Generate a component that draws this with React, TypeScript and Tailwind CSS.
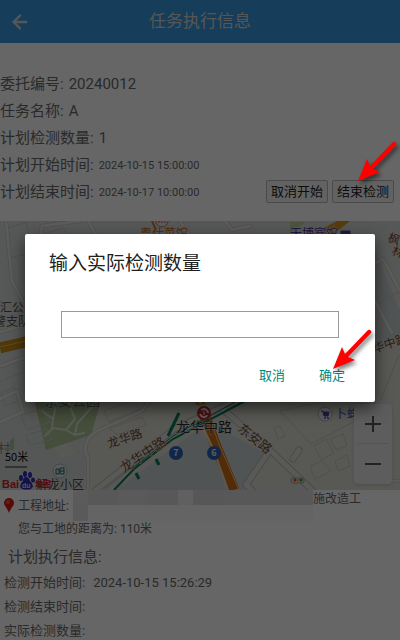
import { useState } from "react";
import type { ReactNode } from "react";
import { ArrowLeft } from "lucide-react";

const summary = [
  { label: "委托编号", value: "20240012" },
  { label: "任务名称", value: "A" },
  { label: "计划检测数量", value: "1" },
  { label: "计划开始时间", value: "2024-10-15 15:00:00", small: true },
  { label: "计划结束时间", value: "2024-10-17 10:00:00", small: true },
];

const execution = [
  { label: "检测开始时间", value: "2024-10-15 15:26:29" },
  { label: "检测结束时间", value: "" },
  { label: "实际检测数量", value: "" },
];

const cjk = "'Noto Sans CJK SC', sans-serif";

function PointerArrow({ className }: { className: string }) {
  return (
    <svg className={className} width="44" height="46" viewBox="0 0 44 46" aria-hidden="true">
      <g fill="#f00" style={{ filter: "drop-shadow(2px 3px 2px rgba(0,0,0,.5))" }}>
        <path d="M2 41 11 19 14 26 37 2Q39 1 40 3 41 4 40 5L17 29 24 32Z" />
      </g>
    </svg>
  );
}

function RoadName({ x, y, angle, size = 12, children }: { x: number; y: number; angle: number; size?: number; children: ReactNode }) {
  return (
    <text
      transform={`translate(${x} ${y}) rotate(${angle})`}
      fontSize={size}
      fill="#6d4a34"
      stroke="#e0ded8"
      strokeWidth="1"
      paintOrder="stroke"
    >
      {children}
    </text>
  );
}

function CityMap() {
  return (
    <svg className="block h-[269px] w-full" viewBox="0 0 400 269" preserveAspectRatio="xMidYMid slice" fontFamily={cjk} role="img" aria-label="地图">
      <rect width="400" height="269" fill="#dddbd3" />
      {/* districts */}
      <path d="M0 0H400V60L350 80 0 190Z" fill="#d6dbd9" />
      <path d="M375 30 400 90V120L375 130Z" fill="#cbd3d2" />
      <path d="M0 145 30 140V190L82 269H0Z" fill="#d3d9d7" />
      <path d="M40 190 76 232 46 245 70 269H85V225L95 200 70 182Z" fill="#d4dad8" />
      <path d="M115 269 200 207 234 269Z" fill="#cad3d2" />
      <path d="M217 206 268 233 247 269H232Z" fill="#cad3d2" />
      <path d="M34 179H101L91 214 46 229Z" fill="#adc193" />
      <path d="M10 220 14 216V229H9Z" fill="#adc193" />
      <path d="M290 1H305L290 13Z" fill="#bdd198" />

      {/* blocks */}
      <g fill="none" stroke="#c4c7c4" strokeWidth="1">
        <path d="M6 8 26 1 33 31 10 37ZM43 13 64 7 74 27 52 32ZM0 130 24 125M0 160 24 151M1 172 14 166 18 180 5 185ZM21 194 43 188 50 201 27 209ZM26 214 47 208 51 219 30 224Z" />
        <path d="M104 190 133 179 140 188 109 201ZM110 207 142 196 146 204 116 214ZM280 190 330 179 355 200 311 223 298 209ZM274 207 280 205 285 215 278 218ZM314 225 326 218 334 232 321 239ZM330 218 343 213 347 225 336 229ZM335 240 347 234 350 245 338 250ZM310 245 322 240 331 250 315 258ZM375 138V190M399 134 380 180M375 60 400 90M375 85 400 70" />
      </g>
      <g fill="none" strokeLinejoin="round" strokeLinecap="round">
        <g stroke="#b9bbb7" strokeWidth="4">
          <path d="M6 0 12 60 27 88M0 111 40 100M37 33 42 5 80 0M88 0 97 16M0 145 38 132M0 178 17 170 23 191 0 201M88 269V238Q80 220 97 210L142 190 164 159M180 0 190 15M225 0 232 9 250 5M370 45 383 38 400 70M375 80 392 112M360 260H400" />
        </g>
        <g stroke="#e4e3dd" strokeWidth="3">
          <path d="M6 0 12 60 27 88M0 111 40 100M37 33 42 5 80 0M88 0 97 16M0 145 38 132M0 178 17 170 23 191 0 201M88 269V238Q80 220 97 210L142 190 164 159M180 0 190 15M225 0 232 9 250 5M370 45 383 38 400 70M375 80 392 112M360 260H400" />
        </g>
        <g stroke="#d9dfd0" strokeWidth="2">
          <path d="M42 190 53 198 57 181M53 198 52 207 66 209 75 198 68 181M66 209 75 214 77 203 97 180M53 207 45 215M75 214 84 212" />
        </g>
        <path d="M96 269 174 208 240 178M224 189 270 229 312 269M270 229 246 264 252 269M293 238 299 229" stroke="#b7b7b2" strokeWidth="7" />
        <path d="M96 269 174 208 240 178M224 189 270 229 312 269M270 229 246 264 252 269M293 238 299 229" stroke="#dfdfdc" strokeWidth="5" />
        <path d="M105 268 176 211 238 180" stroke="#b3b3b3" strokeWidth="1" />
      </g>

      {/* expressway and metro */}
      <path d="M0 127 30 120" stroke="#c78d17" strokeWidth="11" />
      <path d="M0 126 30 119" stroke="#edb947" strokeWidth="1" />
      <path d="M306 16 337 0H350L330 16Z" fill="#d99a17" />
      <path d="m203 190 12 33 19 46" fill="none" stroke="#cc6d16" strokeWidth="11" />
      <path d="m207 190 12 33 20 46" fill="none" stroke="#f5c48a" strokeWidth="1" />
      <path d="m202 204 12 26 14 39" fill="none" stroke="#e9dac0" strokeWidth="2" />
      <path d="M114 269 134 248 173 218 245 180" fill="none" stroke="#0a7c5c" strokeWidth="2" />
      <path d="M134 246 173 215 235 181" fill="none" stroke="#0a7c5c" strokeWidth="1" />
      <path d="m168 215 11-23M136 252l3 6M156 238l3 6" stroke="#0a7c5c" strokeWidth="3" />

      {/* place names */}
      <g stroke="#dededa" strokeWidth="1" paintOrder="stroke">
        <text x="140" y="17" fontSize="12" fill="#c56c13">粤仕菜馆</text>
        <text x="290" y="17" fontSize="12" fill="#5540a1">天博宾馆</text>
        <text x="0" y="91" fontSize="12" fill="#505050">汇公安</text>
        <text x="-6" y="105" fontSize="12" fill="#505050">警支队</text>
        <text x="44" y="185" fontSize="14" fill="#536c42">东安公园</text>
        <text x="-2" y="232" fontSize="12" fill="#7d817f">村</text>
        <text x="176" y="211" fontSize="14" fill="#292929">龙华中路</text>
        <text x="335" y="197" fontSize="12" fill="#5540a1">卜蜂</text>
        <text x="36" y="268" fontSize="12" fill="#464646">解龙小区</text>
      </g>
      <RoadName x={109} y={227} angle={-18}>龙华路</RoadName>
      <RoadName x={124} y={252} angle={-34} size={13}>龙华中路</RoadName>
      <RoadName x={237} y={209} angle={39} size={13}>东安路</RoadName>
      <RoadName x={387} y={20} angle={20}>枫</RoadName>
      <RoadName x={391} y={33} angle={20}>林</RoadName>
      <RoadName x={374} y={132} angle={-18}>华中路</RoadName>
      <path d="M341 10h9v5h-9zM343 12v5M348 12v5" fill="#5540a1" stroke="#5540a1" />

      {/* markers */}
      <circle cx="162" cy="0" r="6" fill="#e4e4e4" stroke="#bc7350" />
      <path d="M159-1v3M162-1v3M165-1v3" stroke="#d4472b" />
      <path d="M152 0l4 9" stroke="#d9791f" strokeWidth="2" />
      <path d="m194 183 4-3 3 5M206 183l-3-3-3 4" fill="#e7831f" />
      <circle cx="204" cy="192" r="7" fill="#c3272b" />
      <circle cx="204" cy="192" r="4" fill="none" stroke="#eee" strokeWidth="2" strokeDasharray="9 4" transform="rotate(35 204 192)" />
      <path d="M204 190v4" stroke="#eee" strokeWidth="1" />
      <circle cx="176" cy="232" r="7" fill="#2c62b9" />
      <text x="176" y="235" textAnchor="middle" fontSize="9" fontWeight="700" fill="#e6e6e6">7</text>
      <circle cx="214" cy="232" r="7" fill="#2c62b9" />
      <text x="214" y="235" textAnchor="middle" fontSize="9" fontWeight="700" fill="#e6e6e6">6</text>
      <circle cx="325" cy="193" r="7" fill="#ececef" stroke="#aaa" />
      <path d="M321 190h2l1 5h4l1-4h-6" fill="#5540a1" stroke="#5540a1" />
      <circle cx="325" cy="197" r="1" fill="#5540a1" />
      <circle cx="328" cy="197" r="1" fill="#5540a1" />
      <circle cx="60" cy="250" r="7" fill="#e5e9e6" stroke="#a6b1ad" />
      <path d="M56 248h3v5h-3zM60 247h4v6h-4zM60 250h4" fill="none" stroke="#1b6660" />
      <rect x="291" y="257" width="13" height="5" rx="2" fill="#ddd" stroke="#999" />
      <circle cx="295" cy="259" r="1.5" fill="#e33" />
      <circle cx="298" cy="259" r="1.5" fill="#f8a715" />
      <circle cx="301" cy="259" r="1.5" fill="#149a4c" />

      {/* scale and Baidu mark */}
      <text x="5" y="240" fontSize="11" fill="#080808">50米</text>
      <path d="M5 246H27" fill="none" stroke="#222" />
      <text x="2" y="267" fontFamily="Liberation Sans" fontSize="11" fontWeight="700" fill="#d42129">Bai</text>
      <g fill="#302eb5">
        <ellipse cx="21" cy="257" rx="2" ry="3" />
        <ellipse cx="25" cy="253" rx="2" ry="3" />
        <ellipse cx="30" cy="254" rx="2" ry="3" />
        <ellipse cx="33" cy="259" rx="2" ry="2.5" />
        <path d="M26 256q3 0 4 4 5 5 1 8-4 1-9 0-4-3 1-8 0-4 3-4Z" />
      </g>
      <text x="22" y="267" fontFamily="Liberation Sans" fontSize="7" fontWeight="700" fill="#ddd">du</text>
      <text x="35" y="266" fontSize="8" fontWeight="700" fill="#d42129">地图</text>
    </svg>
  );
}

function MapZoom() {
  return (
    <div className="absolute top-[183px] right-2 flex w-[38px] flex-col rounded-sm bg-[#e9e9e9] px-1 shadow">
      <button type="button" aria-label="放大" className="flex h-10 items-center justify-center border-b border-[#d0d0d0]">
        <svg width="16" height="16" viewBox="0 0 16 16" stroke="#555" strokeWidth="2"><path d="M0 8h16M8 0v16" /></svg>
      </button>
      <button type="button" aria-label="缩小" className="flex h-10 items-center justify-center">
        <svg width="16" height="16" viewBox="0 0 16 16" stroke="#555" strokeWidth="2"><path d="M0 8h16" /></svg>
      </button>
    </div>
  );
}

function TaskButton({ children }: { children: ReactNode }) {
  return (
    <button type="button" className="h-[23px] rounded-xs border border-[#bababa] bg-[#f6f6f6] px-1 text-[13px] leading-5 text-[#222]">
      {children}
    </button>
  );
}

function CountDialog() {
  const [count, setCount] = useState("");

  return (
    <div role="dialog" aria-modal="true" aria-labelledby="count-title" className="relative rounded-xs bg-white px-6 pt-4 pb-3 shadow-[0_6px_16px_rgba(0,0,0,0.6)]">
      <h2 id="count-title" className="text-[19px] leading-7 text-[#212121]">输入实际检测数量</h2>
      <input
        aria-labelledby="count-title"
        inputMode="numeric"
        value={count}
        onChange={(e) => setCount(e.target.value)}
        className="mx-3 mt-[33px] block h-[27px] w-[calc(100%-24px)] border border-[#999] px-2 text-sm outline-none"
      />
      <div className="mt-6 flex justify-end gap-[34px] pr-1.5 text-[13px] leading-7 text-[#00897b]">
        <button type="button">取消</button>
        <button type="button">确定</button>
      </div>
      <PointerArrow className="absolute right-0 bottom-7" />
    </div>
  );
}

export default function App() {
  return (
    <div className="relative min-h-screen overflow-hidden bg-white font-[Roboto,'Noto_Sans_CJK_SC',sans-serif] text-[#6a6a6a]">
      <header className="grid h-[43px] grid-cols-[40px_1fr_40px] items-center bg-[#3899de] text-[#d8d8d8]">
        <button type="button" aria-label="返回" className="flex justify-center">
          <ArrowLeft size={22} strokeWidth={2.5} />
        </button>
        <h1 className="pb-0.5 text-center text-[17px] leading-6">任务执行信息</h1>
      </header>

      <section className="relative h-[178px] pt-7">
        {summary.map((row) => (
          <p key={row.label} className="flex h-[27px] items-center gap-[5px] text-[15px] leading-[27px]">
            <span>{row.label}:</span>
            <span className={row.small ? "text-[11px]" : ""}>{row.value}</span>
          </p>
        ))}
        <div className="absolute right-[6px] bottom-[18px] flex gap-1">
          <TaskButton>取消开始</TaskButton>
          <TaskButton>结束检测</TaskButton>
        </div>
      </section>

      <div className="relative">
        <CityMap />
        <MapZoom />
      </div>

      <section>
        <div className="relative flex h-[31px] text-xs">
          <svg className="mt-2 ml-1 shrink-0" width="11" height="16" viewBox="0 0 11 16" aria-hidden="true">
            <path d="M5 15C4 11 0 8 0 5a5 5 0 0 1 10 0c0 3-4 6-5 10Z" fill="#d41d12" />
            <circle cx="4" cy="4" r="2" fill="#f15541" />
          </svg>
          <span className="ml-[3px] leading-8">工程地址:</span>
          {/* masked address */}
          <div className="ml-1 w-[240px] shrink-0">
            <div className="flex h-[15px]">
              <span className="w-[15px] bg-[#e4e4e4]" />
              <span className="w-[30px] bg-[#dcdcdc]" />
              <span className="w-[30px] bg-[#e2e2e2]" />
              <span className="w-[30px] bg-[#dcdcdc]" />
              <span className="w-[15px] bg-[#efefef]" />
              <span className="w-[30px] bg-[#d9d9d9]" />
              <span className="flex-1 bg-[#dcdcdc]" />
            </div>
            <div className="h-4 border-l-[15px] border-[#e2e2e2] bg-[#fafafa]" />
          </div>
          <span className="leading-[18px]">施改造工</span>
        </div>
        <p className="ml-[18px] text-xs leading-4">您与工地的距离为: 110米</p>
      </section>

      <section className="mt-1.5">
        <h2 className="ml-2 text-[15px] leading-7">计划执行信息:</h2>
        {execution.map((row) => (
          <p key={row.label} className="ml-1 flex h-6 gap-2 text-[13px] leading-6">
            <span>{row.label}:</span>
            <span>{row.value}</span>
          </p>
        ))}
      </section>

      <div className="absolute inset-0 flex flex-col bg-black/60 px-[25px] pt-[234px]">
        <CountDialog />
      </div>
      <PointerArrow className="absolute top-[140px] right-0" />
    </div>
  );
}
